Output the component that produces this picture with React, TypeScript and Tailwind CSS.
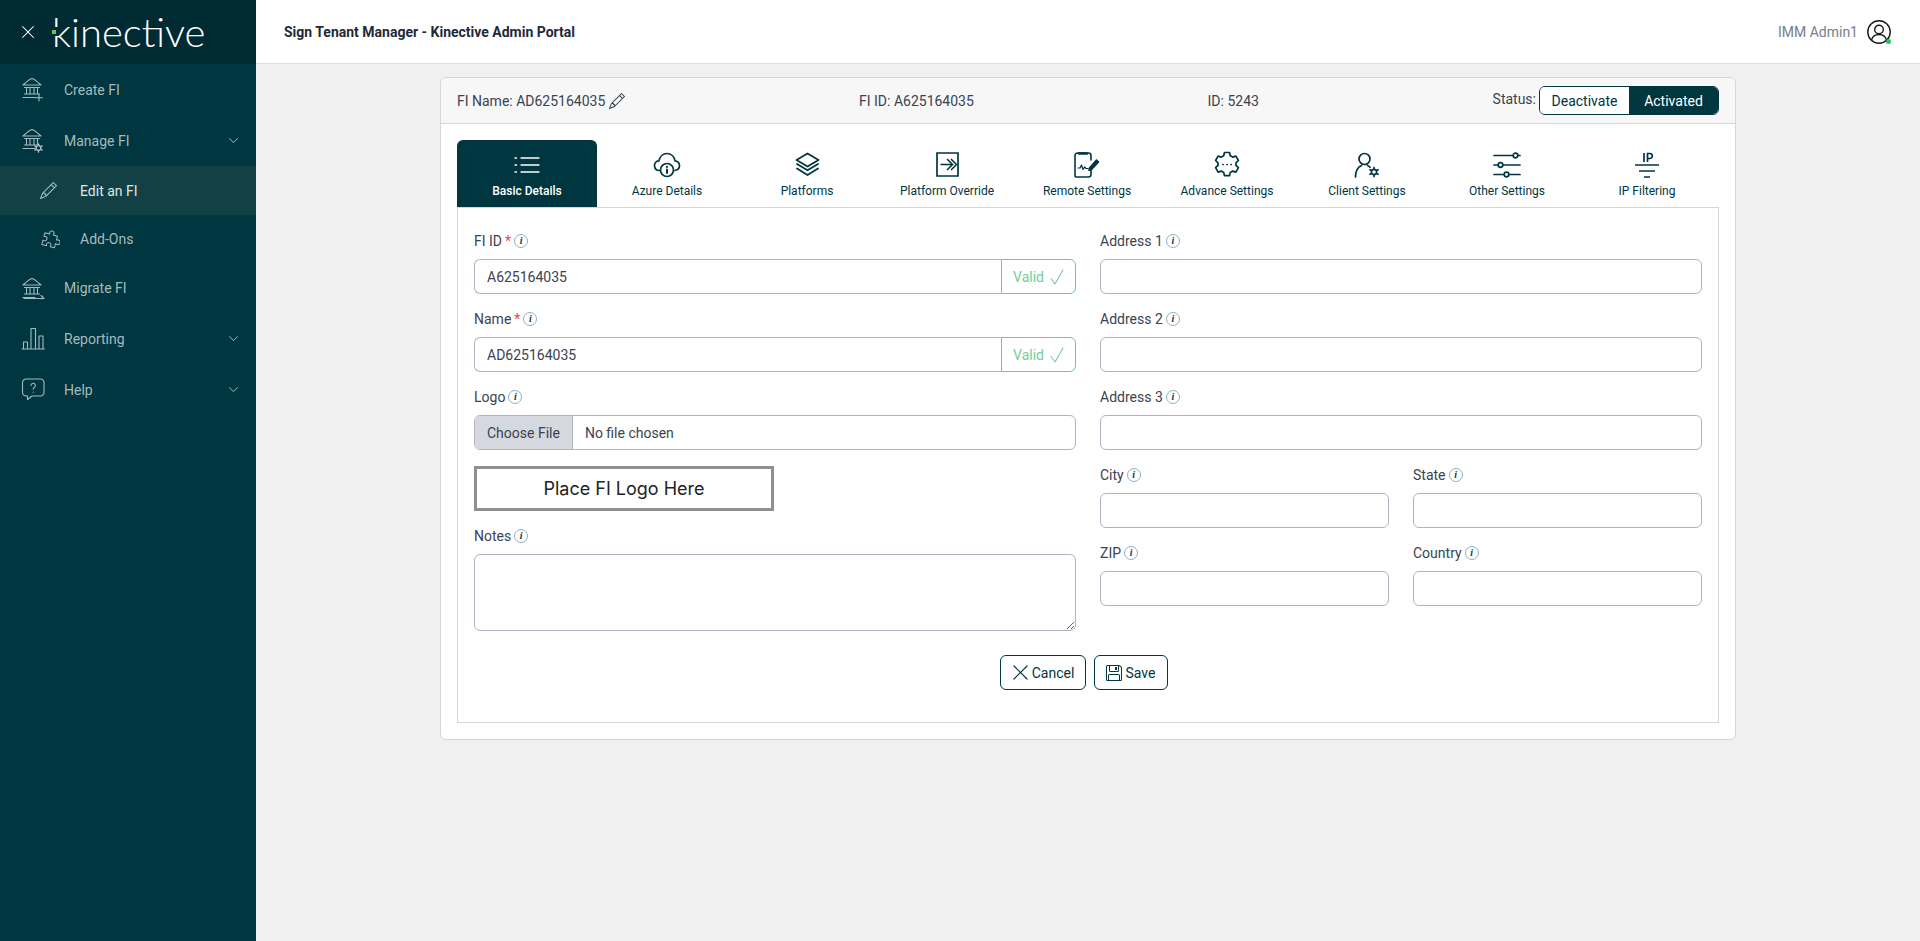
import { ReactNode } from 'react';
import { BsChevronDown, BsFloppy, BsPencil, BsXLg } from 'react-icons/bs';

const stroke = { fill: 'none', stroke: 'currentColor', strokeLinecap: 'round' as const, strokeLinejoin: 'round' as const };

function BankBase() {
  return (
    <>
      <path d="M2 8C5 5.500 7.500 2.500 11 1.500 14.500 2.500 17 5.500 20 8z" />
      <path d="M3.500 10.500h15M5.500 10.500v6.500M9 10.500v6.500M13 10.500v6.500M16.500 10.500v6.500M3.500 17h15" />
      <path d="M2 20.500h12" />
    </>
  );
}

function BankPlus() {
  return (
    <svg width="23" height="25" viewBox="0 0 23 25" strokeWidth="1.1" {...stroke}>
      <BankBase />
      <path d="M18 17.500v6.500M14.500 20.800h7" />
    </svg>
  );
}

function BankGear() {
  return (
    <svg width="23" height="25" viewBox="0 0 23 25" strokeWidth="1.1" {...stroke}>
      <BankBase />
      <circle cx="17.500" cy="20" r="2.400" strokeWidth="1.400" />
      <path d="M17.500 15.800v1.500M17.500 22.700v1.500M13.800 17.900l1.300.8M19.900 21.300l1.300.8M13.800 22.100l1.300-.8M19.900 18.700l1.300-.8" strokeWidth="1.300" />
    </svg>
  );
}

function BankArrow() {
  return (
    <svg width="24" height="23" viewBox="0 0 24 23" strokeWidth="1.1" {...stroke}>
      <BankBase />
      <path d="M3 21.500h20M20 18.500l3 3-3 .1" />
    </svg>
  );
}

function ChartIcon() {
  return (
    <svg width="24" height="23" viewBox="0 0 24 23" strokeWidth="1.1" {...stroke}>
      <path d="M1 22h22.500M2.500 22v-7h4v7M10 22V1.500h4.500V22M18 22V9h4v13" />
    </svg>
  );
}

function HelpIcon() {
  return (
    <svg width="24" height="23" viewBox="0 0 24 23" strokeWidth="1.1" {...stroke}>
      <path d="M5 1h14.500a3.500 3.500 0 0 1 3.500 3.500v10a3.500 3.500 0 0 1-3.500 3.500H11l-4.500 3.500V18H5a3.500 3.500 0 0 1-3.500-3.500v-10A3.500 3.500 0 0 1 5 1z" />
      <path d="M10 7.500a2.200 2.200 0 1 1 3.500 1.800c-.9.600-1.300 1-1.300 2" />
      <path d="M12.200 14v.3" />
    </svg>
  );
}

function PuzzleIcon() {
  return (
    <svg width="20" height="20" viewBox="0 0 20 20" strokeWidth="1" {...stroke}>
      <path transform="rotate(15 10 10)" d="M8 3.500a2.300 2.300 0 0 1 4.500 0c0 .8-.3 1.300-.3 1.800h4.300v4c.5 0 1-.4 1.800-.4a2.300 2.300 0 0 1 0 4.600c-.8 0-1.300-.4-1.800-.4v4.300h-4.300c0-.6.3-1 .3-1.800a2.300 2.300 0 0 0-4.500 0c0 .8.3 1.300.3 1.800H3.500v-4.500c.6 0 1 .3 1.800.3a2.300 2.300 0 0 0 0-4.500c-.8 0-1.200.3-1.800.3V5.300h4.800c0-.5-.3-1-.3-1.800z" />
    </svg>
  );
}

function ListIcon() {
  return (
    <svg width="26" height="20" viewBox="0 0 26 20" strokeWidth="1.300" {...stroke}>
      <path d="M7 3h18M7 10h18M7 17h18M1 3h1.500M1 10h1.500M1 17h1.500" />
    </svg>
  );
}

function CloudIcon() {
  return (
    <svg width="28" height="26" viewBox="0 0 28 26" strokeWidth="1.700" {...stroke}>
      <path d="M6.500 18.500C3.500 18.500 1.500 16.500 1.500 13.500S3.800 8.800 6 8.800C6.800 4.500 10 1.500 14 1.500s7.200 3 8 7.300c2.300 0 4.500 2 4.500 4.700 0 2.700-1.800 4.500-4.500 5" />
      <circle cx="14" cy="18" r="6.500" />
      <path d="M14 17.500v3.500M14 14.700v.3" strokeWidth="2" />
    </svg>
  );
}

function LayersIcon() {
  return (
    <svg width="25" height="25" viewBox="0 0 25 25" strokeWidth="1.800" {...stroke}>
      <path d="M12.500 1.500 23.500 8l-11 6.500L1.500 8z" />
      <path d="M2 12l10.500 6.300L23 12" />
      <path d="M2 16.500l10.500 6.500L23 16.500" />
    </svg>
  );
}

function OverrideIcon() {
  return (
    <svg width="23" height="25" viewBox="0 0 23 25" strokeWidth="1.700" fill="none" stroke="currentColor">
      <path d="M1 1h21v23H1z" />
      <path d="M4.500 12.500h13M11 7l5.500 5.500L11 18M15 7l5.500 5.500L15 18" strokeWidth="1.500" />
    </svg>
  );
}

function RemoteIcon() {
  return (
    <svg width="26" height="26" viewBox="0 0 26 26" strokeWidth="1.600" {...stroke}>
      <path d="M17 8V3.500A2.500 2.500 0 0 0 14.500 1h-11A2.500 2.500 0 0 0 1 3.500v20A1.500 1.500 0 0 0 2.500 25h12a2.500 2.500 0 0 0 2.500-2.500V18" />
      <path d="M5 1.500h8" strokeWidth="2.500" />
      <path d="M4 16h2l1.500-3 1.500 4.500 1.500-2.500 1.500 1.500h2" strokeWidth="1.200" />
      <path d="M15.500 16l7-8 2 2-7 7.500-2.500.8z" fill="currentColor" />
    </svg>
  );
}

function GearDotsIcon() {
  return (
    <svg width="26" height="27" viewBox="0 0 26 27" strokeWidth="1.700" {...stroke}>
      <path d="M10.500 1.500h5l.8 3.300 2.400 1.300 3.200-1 2.500 4.400-2.400 2.300v2.600l2.400 2.300-2.500 4.400-3.200-1-2.400 1.300-.8 3.300h-5l-.8-3.300-2.400-1.300-3.200 1-2.500-4.400 2.400-2.300v-2.600L1.600 9.500l2.500-4.400 3.200 1 2.400-1.300z" />
      <path d="M9 13.500h.2M13 13.500h.2M17 13.500h.2" />
    </svg>
  );
}

function ClientIcon() {
  return (
    <svg width="26" height="26" viewBox="0 0 26 26" strokeWidth="1.700" {...stroke}>
      <circle cx="10.500" cy="7" r="5.500" />
      <path d="M1.500 25c0-6 2.500-10 6-11.500M13.500 13.500c1 .4 1.800 1 2.500 1.600" />
      <circle cx="20" cy="20" r="2.600" strokeWidth="1.600" />
      <path d="M20 15.300v1.500M20 23.200v1.500M15.900 17.700l1.400.8M22.700 21.500l1.400.8M15.900 22.300l1.400-.8M22.700 18.500l1.400-.8" strokeWidth="1.600" />
    </svg>
  );
}

function SlidersIcon() {
  return (
    <svg width="28" height="26" viewBox="0 0 28 26" strokeWidth="1.700" {...stroke}>
      <path d="M1 3.500h19M25 3.500h2M1 13h4M10 13h17M1 22.500h10M16 22.500h11" />
      <circle cx="22.500" cy="3.500" r="2.300" />
      <circle cx="7.500" cy="13" r="2.300" />
      <circle cx="13.500" cy="22.500" r="2.300" />
    </svg>
  );
}

function IpIcon() {
  return (
    <svg width="26" height="26" viewBox="0 0 26 26" strokeWidth="1.700" fill="none" stroke="currentColor">
      <path d="M10 1v9M13.500 10V1.500h2.300a2.300 2.300 0 0 1 0 5h-2.300" />
      <path d="M1 13h24M5 19h16M10 25h6" />
    </svg>
  );
}

function ThinCheck() {
  return (
    <svg width="14" height="16" viewBox="0 0 14 16" strokeWidth="1.100" {...stroke}>
      <path d="M1 9.500l4 5.500L13 1" />
    </svg>
  );
}

function InfoDot() {
  return (
    <span className="ml-[3px] inline-flex h-[14px] w-[14px] items-center justify-center rounded-full border border-[#8fb0c4] font-['Liberation_Serif',serif] text-[10px] font-bold italic leading-none text-[#1d3340]">
      i
    </span>
  );
}

function Label({ text, required }: { text: string; required?: boolean }) {
  return (
    <label className="mb-2 flex h-[21px] items-center text-sm text-[#3b4351]">
      {text}
      {required && <span className="ml-[3px] text-[#ef4444]">*</span>}
      <InfoDot />
    </label>
  );
}

const inputClass = 'h-[35px] w-full rounded-md border border-[#b1b4c0] bg-white px-3 text-sm text-[#3b4351] outline-none';

function TextField({ label }: { label: string }) {
  return (
    <div className="mb-[14px]">
      <Label text={label} />
      <input type="text" className={inputClass} />
    </div>
  );
}

function ValidField({ label, value }: { label: string; value: string }) {
  return (
    <div className="mb-[14px]">
      <Label text={label} required />
      <div className="flex h-[35px]">
        <input type="text" defaultValue={value} className="h-full min-w-0 flex-1 rounded-l-md border border-r-0 border-[#b1b4c0] bg-white px-3 text-sm text-[#3b4351] outline-none" />
        <div className="flex h-full w-[75px] items-center justify-center gap-[6px] rounded-r-md border border-[#72c893] text-sm text-[#72cf96]">
          Valid
          <ThinCheck />
        </div>
      </div>
    </div>
  );
}

type NavItem = { label: string; icon: ReactNode; height: string; sub?: boolean; chevron?: boolean; active?: boolean };

const navItems: NavItem[] = [
  { label: 'Create FI', icon: <BankPlus />, height: 'h-[51px]' },
  { label: 'Manage FI', icon: <BankGear />, height: 'h-[51px]', chevron: true },
  { label: 'Edit an FI', icon: <BsPencil className="text-[17px]" />, height: 'h-[49px]', sub: true, active: true },
  { label: 'Add-Ons', icon: <PuzzleIcon />, height: 'h-[48px]', sub: true },
  { label: 'Migrate FI', icon: <BankArrow />, height: 'h-[50px]' },
  { label: 'Reporting', icon: <ChartIcon />, height: 'h-[51px]', chevron: true },
  { label: 'Help', icon: <HelpIcon />, height: 'h-[51px]', chevron: true },
];

const tabs: { label: string; icon: ReactNode }[] = [
  { label: 'Basic Details', icon: <ListIcon /> },
  { label: 'Azure Details', icon: <CloudIcon /> },
  { label: 'Platforms', icon: <LayersIcon /> },
  { label: 'Platform Override', icon: <OverrideIcon /> },
  { label: 'Remote Settings', icon: <RemoteIcon /> },
  { label: 'Advance Settings', icon: <GearDotsIcon /> },
  { label: 'Client Settings', icon: <ClientIcon /> },
  { label: 'Other Settings', icon: <SlidersIcon /> },
  { label: 'IP Filtering', icon: <IpIcon /> },
];

function Sidebar() {
  return (
    <aside className="flex w-64 shrink-0 flex-col bg-[#00363f]">
      <div className="flex h-16 items-center bg-[#002b33] pl-[20px] text-white">
        <BsXLg className="text-[16px]" />
        <div className="relative ml-[16px] font-['Lato',sans-serif] text-[40px] font-light leading-none">
          kinective
          <span className="absolute left-0 top-[15px] flex h-[9px] w-[6px] items-center bg-[#002b33]">
            <span className="h-1 w-1 bg-[#6cc24a]" />
          </span>
        </div>
      </div>
      <nav>
        {navItems.map((item) => (
          <div key={item.label} className={`flex items-center text-[#a3bbbe] ${item.height} ${item.active ? 'bg-[#124045]' : ''} ${item.sub ? 'pl-10' : 'pl-[21px]'}`}>
            <span className={`flex shrink-0 items-center ${item.sub ? 'w-10' : 'w-[43px]'}`}>{item.icon}</span>
            <span className={`flex-1 text-sm ${item.active ? 'text-[#dfe7e8]' : ''}`}>{item.label}</span>
            {item.chevron && <BsChevronDown className="mr-[17px] text-[11px]" />}
          </div>
        ))}
      </nav>
    </aside>
  );
}

function Header() {
  return (
    <header className="flex h-16 items-center justify-between border-b border-[#dcdde2] bg-white pl-7 pr-[29px]">
      <h1 className="text-sm font-bold text-[#1f2a37]">Sign Tenant Manager - Kinective Admin Portal</h1>
      <div className="flex items-center gap-[9px] text-sm text-[#777e8c]">
        IMM Admin1
        <span className="relative">
          <svg width="24" height="24" viewBox="0 0 24 24" fill="none" stroke="#16191d" strokeWidth="1.400" className="block">
            <circle cx="12" cy="12" r="11.200" />
            <circle cx="12" cy="9.500" r="4.300" />
            <path d="M4.500 20c1-3.500 3.500-5.500 7.500-5.500s6.500 2 7.500 5.500" />
          </svg>
          <span className="absolute bottom-0 right-0 h-[5px] w-[5px] rounded-full bg-[#22c55e]" />
        </span>
      </div>
    </header>
  );
}

function CardHeader() {
  return (
    <div className="flex h-[46px] items-center justify-between border-b border-[#d6d6d6] bg-[#f7f7f7] pl-4 pr-4 text-sm text-[#3b4351]">
      <span className="flex items-center">
        FI Name: AD625164035
        <BsPencil className="ml-1 text-[16px]" />
      </span>
      <span>FI ID: A625164035</span>
      <span>ID: 5243</span>
      <span className="flex items-center">
        <span className="mr-[3px] -mt-[3px]">Status:</span>
        <span className="flex h-[29px] items-stretch overflow-hidden rounded-md border border-[#00363f]">
          <span className="flex w-[89px] items-center justify-center bg-white text-[#00363f]">Deactivate</span>
          <span className="flex w-[89px] items-center justify-center bg-[#00363f] text-white">Activated</span>
        </span>
      </span>
    </div>
  );
}

function TabBar() {
  return (
    <div className="flex h-[67px]">
      {tabs.map((tab, i) => (
        <div key={tab.label} className={`flex w-[140px] flex-col items-center justify-end pb-[9px] text-xs ${i === 0 ? 'rounded-t-md bg-[#00363f] font-medium text-white' : 'text-[#00363f]'}`}>
          <span className="flex h-[27px] items-center">{tab.icon}</span>
          <span className="mt-[6px] leading-[14px]">{tab.label}</span>
        </div>
      ))}
    </div>
  );
}

function DetailsForm() {
  return (
    <form className="border border-[#d6d6d6] px-4 pb-8 pt-[22px]">
      <div className="grid grid-cols-2 gap-x-6">
        <div>
          <ValidField label="FI ID" value="A625164035" />
          <ValidField label="Name" value="AD625164035" />
          <div className="mb-4">
            <Label text="Logo" />
            <input type="file" className="block h-[35px] w-full overflow-hidden rounded-md border border-[#b1b4c0] bg-white text-sm leading-[33px] text-[#3b4351] file:mr-3 file:h-[33px] file:border-0 file:border-r file:border-[#b1b4c0] file:bg-[#d5d8de] file:px-3 file:text-sm file:text-[#3b4351]" />
          </div>
          <div className="mb-[14px] flex h-[45px] w-[300px] items-center justify-center border-[3px] border-[#8f8f8f] font-['Inter',sans-serif] text-lg text-[#222]">
            Place FI Logo Here
          </div>
          <Label text="Notes" />
          <textarea className="block h-[77px] w-full rounded-md border border-[#b1b4c0] bg-white px-3 py-[6px] text-sm outline-none" />
        </div>
        <div>
          <TextField label="Address 1" />
          <TextField label="Address 2" />
          <TextField label="Address 3" />
          <div className="grid grid-cols-2 gap-x-6">
            <TextField label="City" />
            <TextField label="State" />
            <TextField label="ZIP" />
            <TextField label="Country" />
          </div>
        </div>
      </div>
      <div className="mt-6 flex justify-center gap-2 pr-[9px] text-sm text-[#00363f]">
        <button type="button" className="flex h-[35px] w-[86px] items-center justify-center gap-[2px] rounded-md border border-[#00363f] bg-white">
          <BsXLg className="text-[19px]" />
          Cancel
        </button>
        <button type="button" className="flex h-[35px] w-[74px] items-center justify-center gap-[4px] rounded-md border border-[#00363f] bg-white">
          <BsFloppy className="text-[16px]" />
          Save
        </button>
      </div>
    </form>
  );
}

export default function App() {
  return (
    <div className="flex min-h-[941px] bg-[#f0f0f0] font-['Roboto',sans-serif]">
      <Sidebar />
      <div className="min-w-0 flex-1">
        <Header />
        <main className="px-[184px] pt-[13px]">
          <div className="overflow-hidden rounded-md border border-[#d6d6d6] bg-white">
            <CardHeader />
            <div className="px-4 pb-4 pt-[16px]">
              <TabBar />
              <DetailsForm />
            </div>
          </div>
        </main>
      </div>
    </div>
  );
}
